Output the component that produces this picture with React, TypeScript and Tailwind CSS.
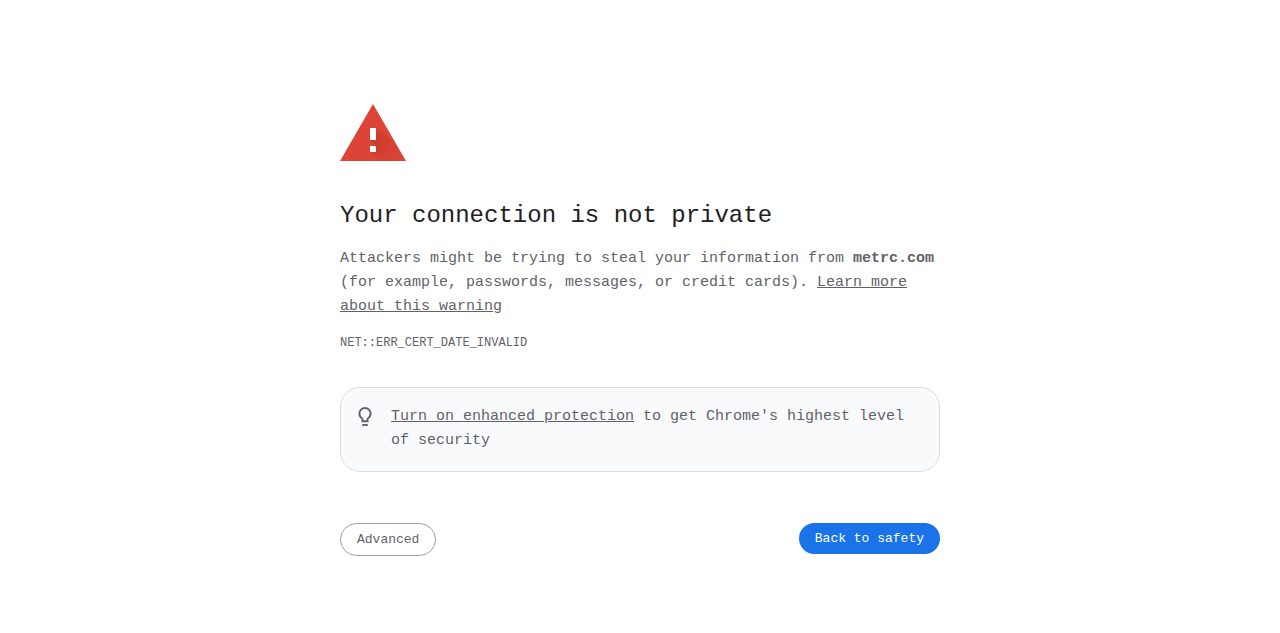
import React from 'react';

function WarningIcon() {
  return (
    <svg width="66" height="57" viewBox="0 0 66 57" aria-hidden="true">
      <defs>
        <radialGradient id="shadow" cx="33" cy="38" r="26" gradientUnits="userSpaceOnUse">
          <stop offset="0" stopColor="#A52714" stopOpacity="0.35" />
          <stop offset="1" stopColor="#A52714" stopOpacity="0" />
        </radialGradient>
      </defs>
      <path d="M0 57h66L33 0z" fill="#DB4437" />
      <path d="M36 24l19 14 11 19H39l-9-9 6-6-6-6z" fill="url(#shadow)" />
      <path d="M30 24h6v12h-6zM30 42h6v6h-6z" fill="#fff" />
    </svg>
  );
}

function BulbIcon() {
  return (
    <svg
      className="size-6 shrink-0"
      viewBox="0 0 24 24"
      fill="none"
      stroke="#5F6368"
      strokeWidth="1.9"
      aria-hidden="true"
    >
      <path d="M9.4 16.3v-2.6C7.6 12.6 6.4 11 6.4 8.6a5.6 5.6 0 0 1 11.2 0c0 2.4-1.2 4-3 5.1v2.6z" />
      <path d="M9.2 20h5.6" />
    </svg>
  );
}

export default function App() {
  return (
    <main className="mx-auto w-full max-w-[600px] pt-[104px] font-['Liberation_Mono',monospace] text-[15px] leading-6 text-[#5F6368]">
      <WarningIcon />

      <h1 className="mt-10 text-2xl leading-[29px] text-[#202124]">Your connection is not private</h1>

      <p className="mt-[17px]">
        Attackers might be trying to steal your information from <strong>metrc.com</strong> (for
        example, passwords, messages, or credit cards).{' '}
        <a href="#" className="underline">Learn more about this warning</a>
      </p>

      <div className="mt-4 text-xs leading-4">NET::ERR_CERT_DATE_INVALID</div>

      {/* Enhanced protection */}
      <div className="mt-9 flex gap-[14px] rounded-[20px] border border-[#DADCE0] bg-[#F9FAFC] px-3 pt-[17px] pb-[18px]">
        <BulbIcon />
        <p>
          <a href="#" className="underline">Turn on enhanced protection</a> to get Chrome's highest
          level of security
        </p>
      </div>

      {/* Buttons */}
      <div className="mt-[51px] flex items-start justify-between text-[13px] leading-[15px]">
        <button type="button" className="rounded-full border border-[#9AA0A6] px-4 py-2">
          Advanced
        </button>
        <button type="button" className="rounded-full bg-[#1A73E8] px-4 py-2 text-white">
          Back to safety
        </button>
      </div>
    </main>
  );
}
